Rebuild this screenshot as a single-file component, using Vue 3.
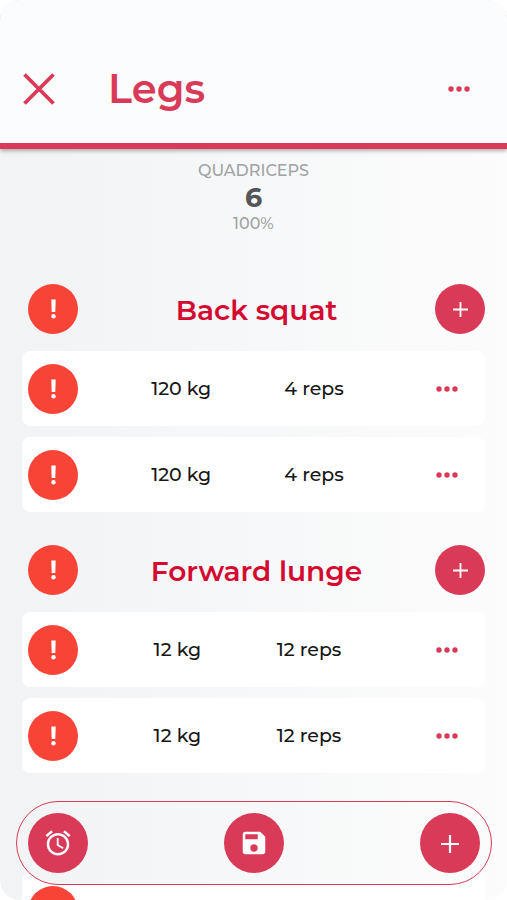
<script setup>
import { ref } from 'vue'

const workout = ref({
  name: 'Legs',
  muscle: 'QUADRICEPS',
  sets: 6,
  share: '100%',
})

const exercises = ref([
  {
    name: 'Back squat',
    sets: [
      { weight: '120 kg', reps: '4 reps' },
      { weight: '120 kg', reps: '4 reps' },
    ],
  },
  {
    name: 'Forward lunge',
    sets: [
      { weight: '12 kg', reps: '12 reps' },
      { weight: '12 kg', reps: '12 reps' },
    ],
  },
  {
    name: '',
    sets: [{ weight: '', reps: '' }],
  },
])
</script>

<template>
  <div class="screen">
    <header class="top">
      <button class="plain close" type="button" aria-label="Close">
        <svg width="32" height="32" viewBox="0 0 32 32">
          <path d="M1.500 1.500L30.500 30.500M30.500 1.500L1.500 30.500" fill="none" stroke="currentColor" stroke-width="3.800" />
        </svg>
      </button>
      <h1>{{ workout.name }}</h1>
      <button class="plain more" type="button" aria-label="Workout options">
        <svg width="24" height="8" viewBox="0 0 24 8" fill="currentColor">
          <circle cx="4" cy="4" r="2.700" /><circle cx="12" cy="4" r="2.700" /><circle cx="20" cy="4" r="2.700" />
        </svg>
      </button>
    </header>

    <main class="content">
      <section class="summary">
        <span class="label">{{ workout.muscle }}</span>
        <strong>{{ workout.sets }}</strong>
        <span class="label">{{ workout.share }}</span>
      </section>

      <section v-for="(exercise, i) in exercises" :key="i" class="exercise">
        <div class="heading">
          <button class="round alert" type="button" aria-label="Exercise status">
            <svg width="8" height="20" viewBox="0 0 8 20" fill="currentColor">
              <path d="M2.300 0.500h4.400l-0.400 12.500h-3.600z" /><circle cx="4.500" cy="17.200" r="2.200" />
            </svg>
          </button>
          <h2>{{ exercise.name }}</h2>
          <button class="round" type="button" aria-label="Add set">
            <svg width="16" height="16" viewBox="0 0 16 16">
              <path d="M8.500 1v15M1 8.500h15" fill="none" stroke="currentColor" stroke-width="1.800" />
            </svg>
          </button>
        </div>
        <ul class="sets">
          <li v-for="(set, j) in exercise.sets" :key="j" class="set">
            <button class="round alert" type="button" aria-label="Set status">
              <svg width="8" height="20" viewBox="0 0 8 20" fill="currentColor">
                <path d="M2.300 0.500h4.400l-0.400 12.500h-3.600z" /><circle cx="4.500" cy="17.200" r="2.200" />
              </svg>
            </button>
            <span>{{ set.weight }}</span>
            <span>{{ set.reps }}</span>
            <button class="plain more" type="button" aria-label="Set options">
              <svg width="24" height="8" viewBox="0 0 24 8" fill="currentColor">
                <circle cx="4" cy="4" r="2.700" /><circle cx="12" cy="4" r="2.700" /><circle cx="20" cy="4" r="2.700" />
              </svg>
            </button>
          </li>
        </ul>
      </section>
    </main>

    <nav class="toolbar">
      <button class="round large" type="button" aria-label="Timer">
        <svg width="30" height="30" viewBox="0 0 24 24" fill="currentColor">
          <path d="M22 5.720l-4.600-3.860-1.290 1.530 4.600 3.860L22 5.720zM7.880 3.390L6.600 1.860 2 5.710l1.290 1.530 4.590-3.850zM12.500 8H11v6l4.750 2.850.75-1.230-4-2.370V8zM12 4c-4.970 0-9 4.030-9 9s4.020 9 9 9c4.970 0 9-4.030 9-9s-4.030-9-9-9zm0 16c-3.870 0-7-3.130-7-7s3.130-7 7-7 7 3.130 7 7-3.130 7-7 7z" />
        </svg>
      </button>
      <button class="round large" type="button" aria-label="Save">
        <svg width="30" height="30" viewBox="0 0 24 24" fill="currentColor">
          <path d="M17 3H5c-1.110 0-2 .9-2 2v14c0 1.100.89 2 2 2h14c1.100 0 2-.9 2-2V7l-4-4zm-5 16c-1.660 0-3-1.340-3-3s1.340-3 3-3 3 1.340 3 3-1.340 3-3 3zm3-10H5V5h10v4z" />
        </svg>
      </button>
      <button class="round large" type="button" aria-label="Add exercise">
        <svg width="20" height="20" viewBox="0 0 20 20">
          <path d="M10 2v18M1 11h18" fill="none" stroke="currentColor" stroke-width="2.200" />
        </svg>
      </button>
    </nav>
  </div>
</template>

<style>
body {
  margin: 0;
  background: #fff;
}
</style>

<style scoped>
.screen {
  --accent: #d83a58;
  --page: linear-gradient(90deg, #f1f3f5, #fcfcfc);
  position: relative;
  display: flex;
  flex-direction: column;
  height: 100vh;
  overflow: hidden;
  border-radius: 20px;
  background: var(--page) fixed;
  font-family: Montserrat, Inter, sans-serif;
  color: #161616;
}

button {
  padding: 0;
  border: 0;
  font: inherit;
  cursor: pointer;
}

svg {
  display: block;
}

.plain {
  display: grid;
  place-items: center;
  background: none;
  color: var(--accent);
}

.more {
  width: 60px;
  height: 50px;
}

.top {
  display: flex;
  align-items: center;
  flex: none;
  padding: 57px 18px 22px 22px;
  border-bottom: 6px solid var(--accent);
  background: #fbfcfe;
  box-shadow: 0 2px 4px rgba(0, 0, 0, 0.3);
  z-index: 1;
}

.close {
  width: 34px;
  height: 50px;
}

h1 {
  flex: 1;
  margin: 0 0 0 52px;
  font-size: 40px;
  line-height: 64px;
  font-weight: 600;
  color: var(--accent);
}

.content {
  flex: 1;
  min-height: 0;
  overflow: hidden;
  padding: 11px 22px 0;
}

.summary {
  display: flex;
  flex-direction: column;
  align-items: center;
  margin-bottom: 49px;
}

.label {
  font-size: 16px;
  line-height: 22px;
  font-weight: 500;
  color: #a0a2a4;
}

.summary strong {
  font-size: 27px;
  line-height: 31px;
  font-weight: 700;
  color: #545658;
}

.exercise {
  margin-bottom: 33px;
}

.heading {
  display: flex;
  align-items: center;
  justify-content: space-between;
  padding-left: 6px;
  margin-bottom: 17px;
}

h2 {
  margin: 0;
  padding-top: 2px;
  font-size: 28px;
  line-height: 48px;
  font-weight: 600;
  color: #d40a30;
}

.round {
  display: grid;
  place-items: center;
  flex: none;
  width: 50px;
  height: 50px;
  border-radius: 50%;
  background: var(--accent);
  color: #fff;
}

.alert {
  background: #f84436;
}

.large {
  width: 60px;
  height: 60px;
}

.sets {
  display: grid;
  gap: 11px;
  margin: 0;
  padding: 0;
  list-style: none;
}

.set {
  display: flex;
  align-items: center;
  justify-content: space-between;
  height: 75px;
  padding: 0 8px 0 6px;
  box-sizing: border-box;
  border-radius: 8px;
  background: #fff;
  font-size: 19px;
  line-height: 24px;
  font-weight: 500;
}

.toolbar {
  position: absolute;
  right: 15px;
  bottom: 15px;
  left: 16px;
  z-index: 2;
  display: flex;
  align-items: center;
  justify-content: space-between;
  padding: 11px;
  border: 1px solid var(--accent);
  border-radius: 42px;
  background: var(--page) fixed;
}
</style>
